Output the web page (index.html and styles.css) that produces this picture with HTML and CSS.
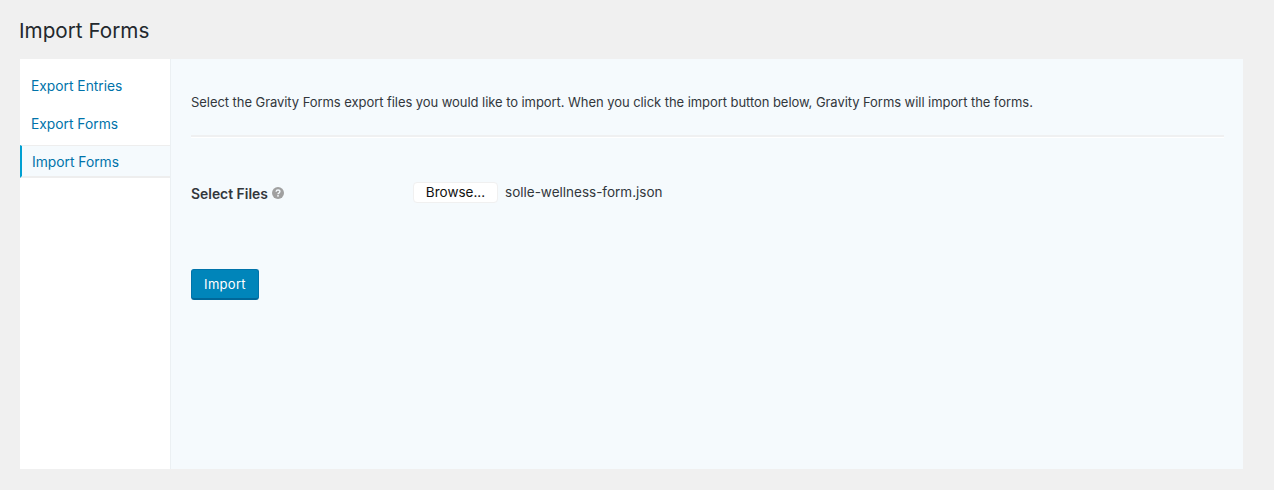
FILE: index.html
```html
<!DOCTYPE html>
<html lang="en">
<head>
    <meta charset="UTF-8">
    <title>Import Forms</title>
    <link rel="stylesheet" href="styles.css">
</head>
<body>
    <h1 class="page-title">Import Forms</h1>
    <div class="panel">
        <ul class="side-nav">
            <li><a href="#">Export Entries</a></li>
            <li><a href="#">Export Forms</a></li>
            <li class="active"><a href="#">Import Forms</a></li>
        </ul>
        <div class="content">
            <p class="intro">Select the Gravity Forms export files you would like to import. When you click the import button below, Gravity Forms will import the forms.</p>
            <div class="divider"></div>
            <div class="file-row">
                <label class="file-label">Select Files
                    <svg class="help-icon" viewBox="0 0 12 12" width="12" height="12">
                        <circle cx="6" cy="6" r="6" fill="#a0a0a0"/>
                        <path d="M4.1 4.7C4.2 3.6 5 3 6 3c1.1 0 1.9.7 1.9 1.6 0 1.5-1.9 1.4-1.9 2.7" fill="none" stroke="#f5fafd" stroke-width="1.4"/>
                        <rect x="5.2" y="8.1" width="1.6" height="1.5" fill="#f5fafd"/>
                    </svg>
                </label>
                <div class="file-field">
                    <button class="browse-btn">Browse...</button>
                    <span class="file-name">solle-wellness-form.json</span>
                </div>
            </div>
            <button class="import-btn">Import</button>
        </div>
    </div>
</body>
</html>
```

FILE: styles.css
```css
body { margin: 0; height: 490px; background: #f0f0f0; font-family: Inter, "Open Sans", sans-serif; color: #32373c; overflow: hidden; }
.page-title { margin: 0; padding: 18px 0 0 19px; height: 41px; font-size: 20.7px; line-height: 26px; font-weight: 400; color: #23282d; }
.panel { display: flex; margin: 0 31px 0 20px; height: 410px; background: #f5fafd; }
.side-nav { list-style: none; margin: 0; padding: 9px 0 0; width: 150px; background: #fff; border-right: 1px solid #ebf0f3; flex-shrink: 0; }
.side-nav li { height: 38px; box-sizing: border-box; line-height: 37px; padding-left: 11px; font-size: 13.8px; }
.side-nav a { color: #0073aa; text-decoration: none; }
.side-nav .active { height: 33px; margin-top: 1px; line-height: 32px; padding-left: 10px; background: #f5fafd; border-left: 2px solid #00a0d2; border-top: 1px solid #eee; border-bottom: 2px solid #eee; }
.content { flex: 1; padding: 35px 19px 0 20px; }
.intro { margin: 0; font-size: 13px; letter-spacing: -0.06px; line-height: 17px; }
.divider { margin-top: 24px; height: 2px; background: #eff0f1; border-bottom: 1px solid #fff; }
.file-row { display: flex; margin-top: 43px; }
.file-label { width: 222px; font-size: 13.9px; font-weight: 600; line-height: 24px; padding-top: 1px; }
.help-icon { margin-left: 1px; vertical-align: 0; }
.file-field { display: flex; align-items: center; height: 22px; }
.browse-btn { width: 85px; height: 21px; padding: 0; background: #fff; border: 1px solid #f0f0f0; border-radius: 4px; font-family: inherit; font-size: 13.5px; color: #111; }
.file-name { margin-left: 7px; font-size: 13.5px; }
.import-btn { display: block; margin-top: 63px; width: 68px; height: 31px; padding: 0; background: #0085ba; border: 1px solid #0073aa; border-bottom: 2px solid #006799; border-radius: 3px; color: #fff; font-family: inherit; font-size: 13px; letter-spacing: 0.3px; }
```
